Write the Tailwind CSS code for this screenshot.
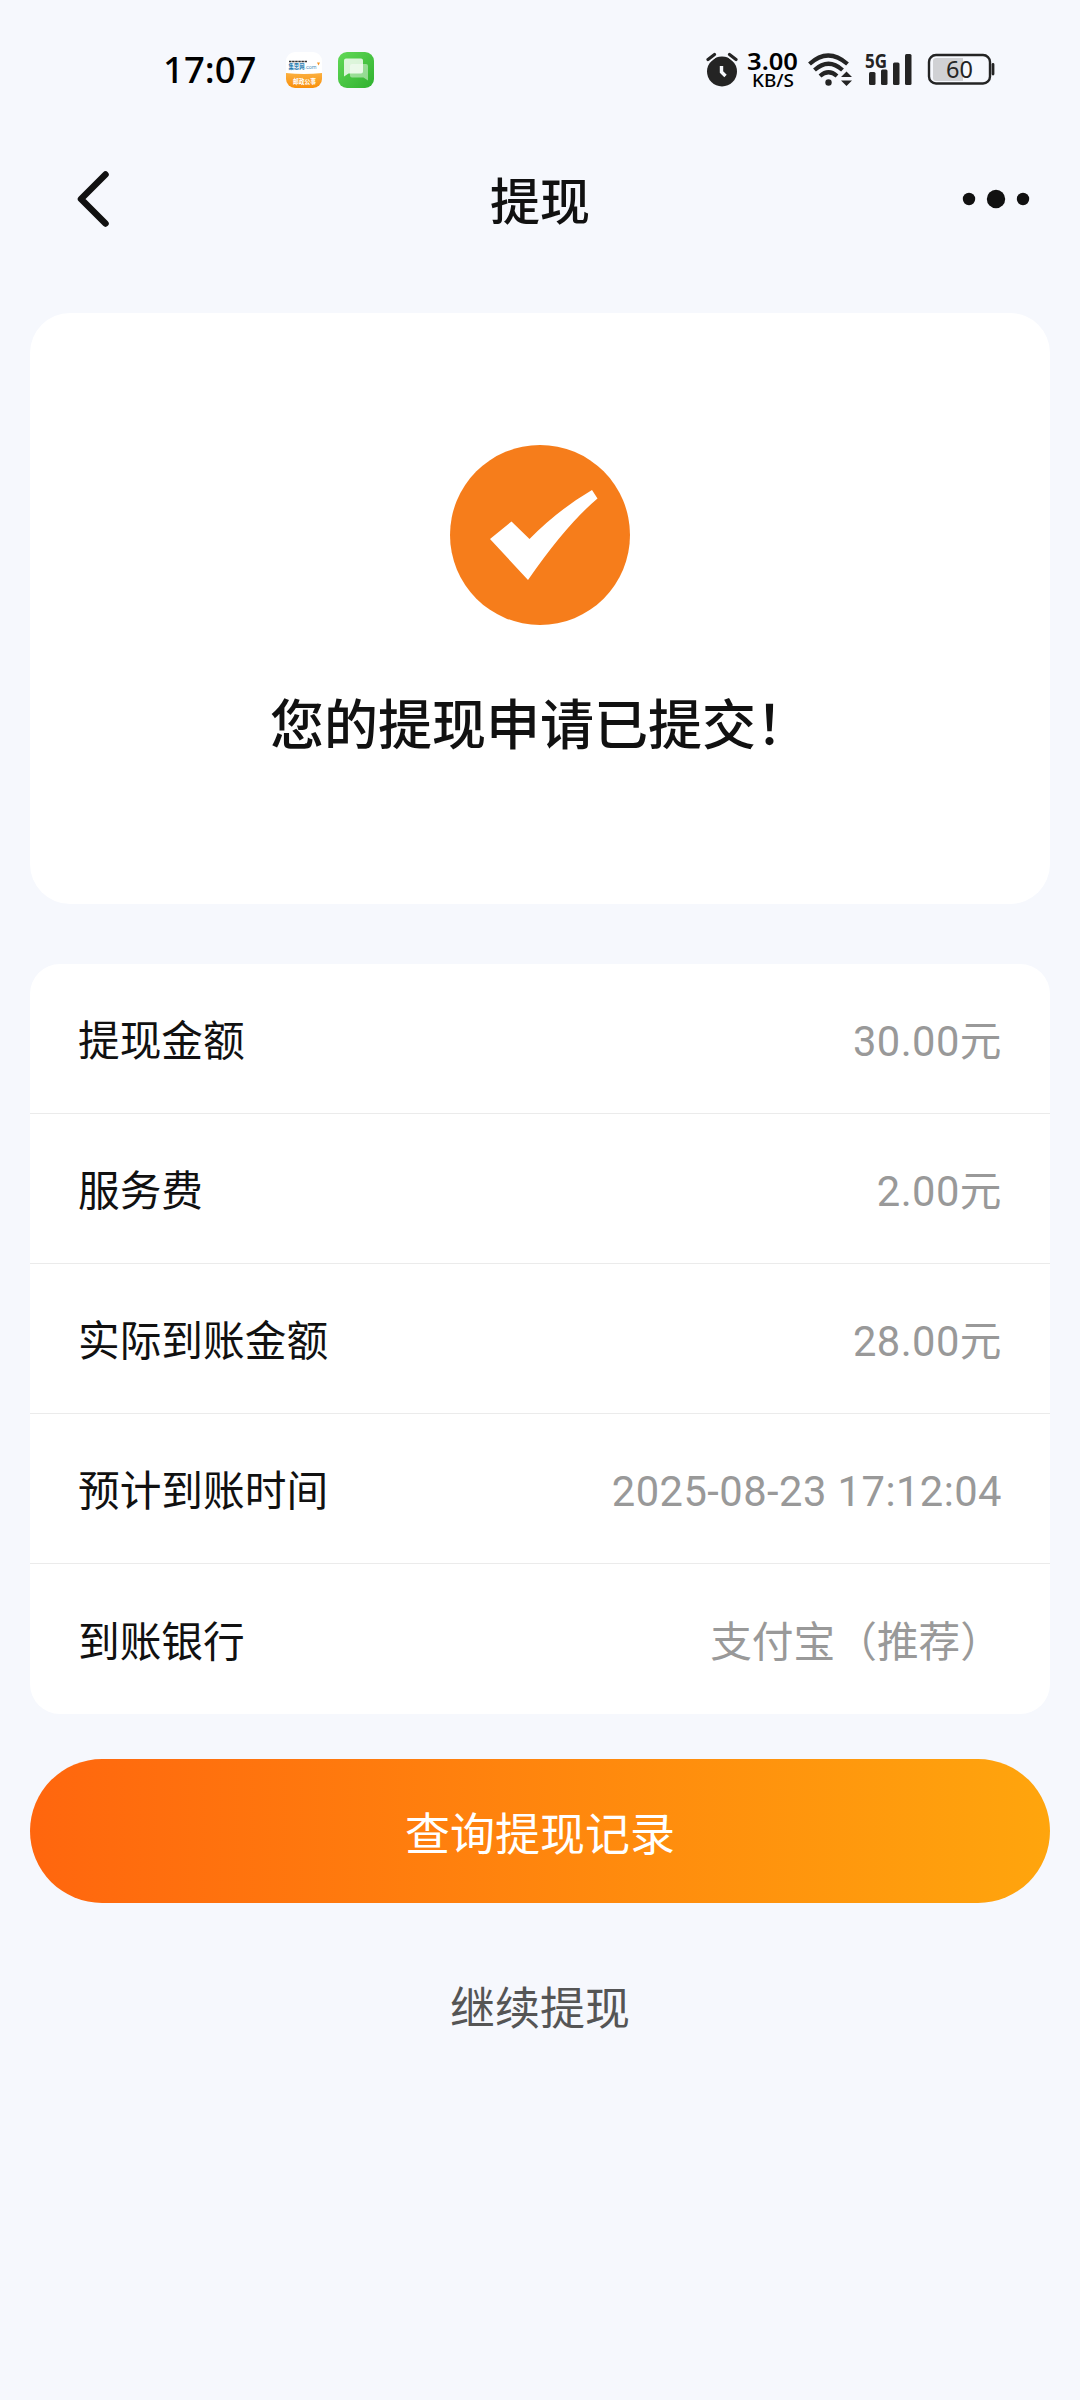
<!DOCTYPE html>
<html lang="zh-CN">
<head>
    <meta charset="UTF-8">
    <meta name="viewport" content="width=device-width, initial-scale=1.0">
    <title>提现</title>
    <script src="https://cdn.jsdelivr.net/npm/@tailwindcss/browser@4"></script>
</head>
<body class="bg-[#f6f8fd] min-h-screen text-[#111111] font-['Roboto','Noto_Sans_CJK_SC',sans-serif]">

    <!-- Barra de estado -->
    <div class="h-[139px] flex items-center justify-between pl-[163px] pr-[85px]">
        <div class="flex items-center">
            <span class="w-[123px] text-[36.5px] leading-none font-medium text-black font-['Noto_Sans',sans-serif]">17:07</span>
            <svg class="w-9 h-9" viewBox="0 0 36 36">
                <defs>
                    <clipPath id="app"><rect width="36" height="36" rx="9"/></clipPath>
                    <linearGradient id="naranja" x1="0" y1="0" x2="0" y2="1"><stop offset="0" stop-color="#fbb040"/><stop offset="1" stop-color="#f98f0a"/></linearGradient>
                </defs>
                <g clip-path="url(#app)">
                    <rect width="36" height="36" fill="#fff"/>
                    <path d="M0 21Q18 23 36 21V36H0Z" fill="url(#naranja)"/>
                    <path d="M3 9.500H21" stroke="#333" stroke-width="1.500" stroke-dasharray="2.500 .6"/>
                    <path d="M31 10.500h3l-1.500 3z" fill="#f7931e"/>
                    <text x="2.500" y="17" font-size="6.500" font-weight="700" fill="#2378ae" textLength="16" lengthAdjust="spacingAndGlyphs" font-family="Noto Sans CJK SC">集思网</text>
                    <text x="18.500" y="16.500" font-size="6" fill="#4d93bd" textLength="12" lengthAdjust="spacingAndGlyphs" font-family="Roboto">.com</text>
                    <text x="7" y="31.500" font-size="6.500" font-weight="700" fill="#fff" textLength="23" lengthAdjust="spacingAndGlyphs" font-family="Noto Sans CJK SC">邮政公事</text>
                </g>
            </svg>
            <svg class="w-9 h-9 ml-4" viewBox="0 0 36 36">
                <defs>
                    <linearGradient id="verde" x1="0" y1="0" x2="1" y2="1"><stop offset="0" stop-color="#62d957"/><stop offset="1" stop-color="#2fb12f"/></linearGradient>
                </defs>
                <rect width="36" height="36" rx="9" fill="url(#verde)"/>
                <path d="M14 12H28Q30 12 30 14V28.500L25.500 25.500H14Q12 25.500 12 23.500V14Q12 12 14 12Z" fill="#fff" fill-opacity=".45"/>
                <path d="M8 6.500H23Q25 6.500 25 8.500V19.500Q25 21.500 23 21.500H10.500L6 24.500V8.500Q6 6.500 8 6.500Z" fill="#fff" fill-opacity=".8"/>
            </svg>
        </div>

        <div class="flex items-center text-[#242424]">
            <!-- Alarma -->
            <svg class="w-8 h-[36px]" viewBox="0 0 32 36">
                <circle cx="16" cy="19.500" r="15" fill="currentColor"/>
                <path d="M1.800 8L9 2M30.200 8L23 2" stroke="#f6f8fd" stroke-width="6.500"/>
                <path d="M2 7.500L8.500 2.500M30 7.500L23.500 2.500" stroke="currentColor" stroke-width="3.200" stroke-linecap="round"/>
                <path d="M15.500 14V20L19.500 24" fill="none" stroke="#f6f8fd" stroke-width="3.400"/>
            </svg>
            <!-- Velocidad de red -->
            <svg class="w-[52px] h-10 ml-[9px] overflow-visible" viewBox="0 0 52 40">
                <g fill="#000" font-family="Noto Sans" font-weight="600">
                    <text x="0" y="20" font-size="24" textLength="51" lengthAdjust="spacingAndGlyphs">3.00</text>
                    <text x="5" y="37" font-size="18" font-weight="500" textLength="42" lengthAdjust="spacingAndGlyphs">KB/S</text>
                </g>
            </svg>
            <!-- Wifi -->
            <svg class="w-11 h-9 ml-[9px]" viewBox="0 0 44 36">
                <g fill="none" stroke="currentColor" stroke-width="4.200">
                    <path d="M1.500 12Q20 -5 39.500 12"/>
                    <path d="M6.500 18Q20.500 5.500 34.500 18"/>
                    <path d="M12 24Q20.500 16.500 29 24"/>
                </g>
                <circle cx="20.500" cy="30.500" r="3.200" fill="currentColor"/>
                <path d="M33 25L38.500 19.500L44 25ZM33 28.500L38.500 34L44 28.500Z" fill="currentColor"/>
            </svg>
            <!-- Señal -->
            <svg class="w-[48px] h-9 ml-[13px] overflow-visible" viewBox="0 0 48 36">
                <text x="0" y="16" font-size="20" font-weight="700" fill="currentColor" textLength="22" lengthAdjust="spacingAndGlyphs" font-family="Noto Sans">5G</text>
                <g fill="currentColor">
                    <rect x="4" y="20" width="6.500" height="13" rx="1.500"/>
                    <rect x="16" y="17.500" width="6.500" height="15.500" rx="1.500"/>
                    <rect x="28" y="10.500" width="6.500" height="22.500" rx="1.500"/>
                    <rect x="40" y="2" width="6.500" height="31" rx="1.500"/>
                </g>
            </svg>
            <!-- Batería -->
            <svg class="w-[68px] h-9 ml-[14px]" viewBox="0 0 68 36">
                <path d="M9 6H36V29H9Q6 29 6 26V9Q6 6 9 6Z" fill="#d0d1d4"/>
                <rect x="2" y="3" width="61" height="28.500" rx="7" fill="none" stroke="currentColor" stroke-width="2.400"/>
                <path d="M66 12.500V22" stroke="currentColor" stroke-width="2.800" stroke-linecap="round"/>
                <text x="32.500" y="25.500" font-size="23.500" text-anchor="middle" fill="currentColor" font-family="Noto Sans">60</text>
            </svg>
        </div>
    </div>

    <!-- Cabecera -->
    <header class="h-[120px] flex items-center justify-between px-[50px]">
        <svg class="w-[68px] h-[58px]" viewBox="0 0 68 58">
            <path d="M55.500 4.500L31 29L55.500 53.500" fill="none" stroke="#111" stroke-width="6.500" stroke-linecap="round" stroke-linejoin="round"/>
        </svg>
        <h1 class="text-[50px] leading-none font-medium pt-2">提现</h1>
        <svg class="w-[68px] h-5" viewBox="0 0 68 20">
            <g fill="#111"><circle cx="7" cy="10" r="6.200"/><circle cx="34" cy="10" r="9.200"/><circle cx="61" cy="10" r="6.200"/></g>
        </svg>
    </header>

    <main class="px-[30px] pt-[54px]">
        <!-- Resultado -->
        <section class="h-[591px] bg-white rounded-[40px] flex flex-col items-center pt-[132px]">
            <svg class="w-[180px] h-[180px]" viewBox="0 0 180 180">
                <circle cx="90" cy="90" r="90" fill="#f67d1b"/>
                <path d="M40 94L61.500 76.500L79.500 94Q108 65 142 45L147.500 53.500Q116 80 78 135Z" fill="#fff"/>
            </svg>
            <p class="mt-[75px] text-[54px] leading-none font-medium">您的提现申请已提交！</p>
        </section>

        <!-- Detalle -->
        <section class="mt-[60px] h-[750px] bg-white rounded-[30px] divide-y divide-[#ebebeb] text-[41.7px] leading-none">
            <div class="h-[150px] px-12 pt-[7px] flex items-center justify-between"><span>提现金额</span><span class="text-[#999999] tracking-[0.45px]">30.00元</span></div>
            <div class="h-[150px] px-12 pt-[7px] flex items-center justify-between"><span>服务费</span><span class="text-[#999999] tracking-[0.45px]">2.00元</span></div>
            <div class="h-[150px] px-12 pt-[7px] flex items-center justify-between"><span>实际到账金额</span><span class="text-[#999999] tracking-[0.45px]">28.00元</span></div>
            <div class="h-[150px] px-12 pt-[7px] flex items-center justify-between"><span>预计到账时间</span><span class="text-[#999999] tracking-[0.45px]">2025-08-23 17:12:04</span></div>
            <div class="h-[150px] px-12 pt-[7px] flex items-center justify-between"><span>到账银行</span><span class="text-[#999999]">支付宝（推荐）</span></div>
        </section>

        <button class="mt-[45px] w-full h-[144px] block rounded-full bg-linear-to-r/srgb from-[#ff660e] to-[#ffa50d] text-white text-[45px] leading-none pt-2">查询提现记录</button>
        <button class="mt-[84px] w-full block text-center text-[#555555] text-[45px] leading-none">继续提现</button>
    </main>

</body>
</html>
